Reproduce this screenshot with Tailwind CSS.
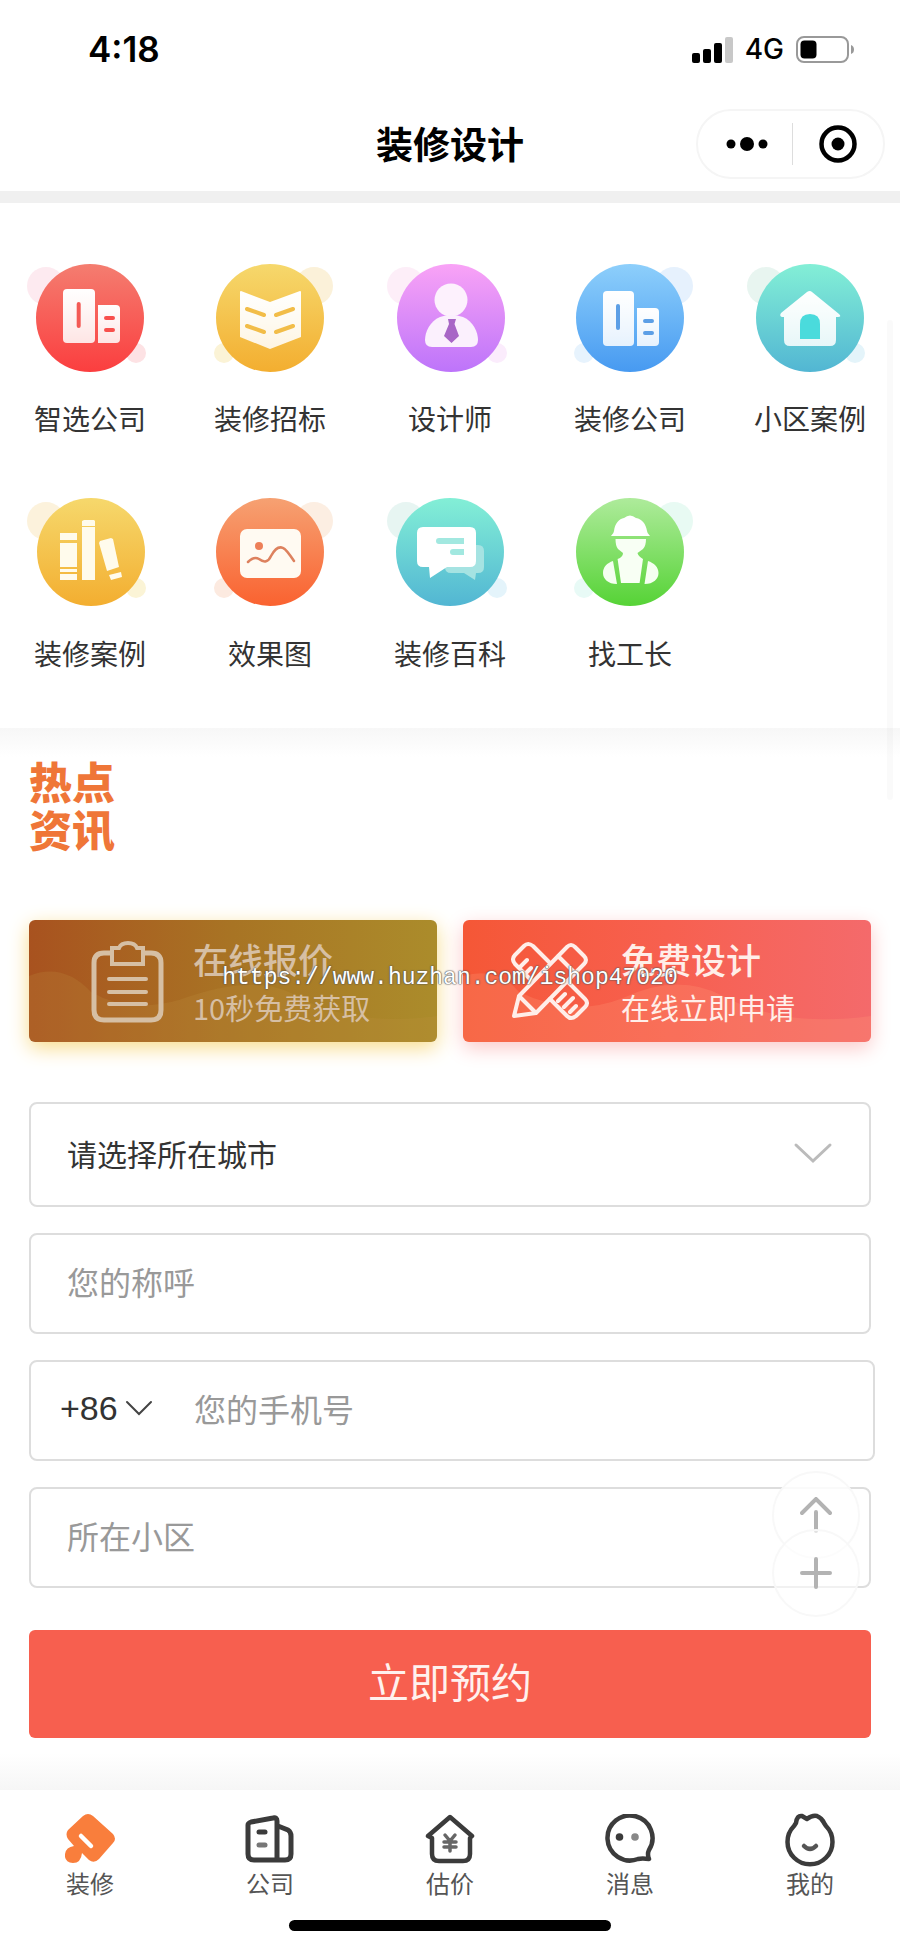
<!DOCTYPE html>
<html lang="zh-CN">
<head>
<meta charset="utf-8">
<meta name="viewport" content="width=device-width, initial-scale=1">
<title>装修设计</title>
<script src="https://cdn.jsdelivr.net/npm/@tailwindcss/browser@4"></script>
</head>
<body class="relative flex min-h-screen flex-col bg-white font-['Noto_Sans_CJK_SC',sans-serif] text-[#333]">

<header class="border-b-12 border-[#f0f0f0] text-black">
  <div class="flex h-24 items-center justify-between pt-[2px] pr-[46px] pl-22 font-['Inter',sans-serif]">
    <time class="text-[35px] font-semibold">4:18</time>
    <div class="flex items-center gap-3">
      <svg class="h-[27px] w-[41px]" viewBox="0 0 41 27" aria-label="信号"><rect x="0" y="17" width="8" height="10" rx="2"/><rect x="11" y="13" width="8" height="14" rx="2"/><rect x="22" y="7" width="8" height="20" rx="2"/><rect x="33" y="1" width="8" height="26" rx="2" fill="#c8c8c8"/></svg>
      <span class="text-[28px] font-medium">4G</span>
      <svg class="h-[27px] w-[58px]" viewBox="0 0 58 27" aria-label="电量"><rect x="1" y="1" width="51" height="25" rx="7" fill="none" stroke="#999" stroke-width="2"/><rect x="4.500" y="4.500" width="16" height="18" rx="4"/><path d="M55 9q3 1 3 4.500t-3 4.500z" fill="#999"/></svg>
    </div>
  </div>
  <div class="grid h-[95px] grid-cols-[1fr_auto_1fr] items-center pr-[15px] pl-[15px]">
    <span></span>
    <h1 class="text-[37px] font-bold">装修设计</h1>
    <div class="flex h-[70px] w-[189px] items-center justify-self-end rounded-full border-2 border-[#f5f5f5]">
      <button type="button" class="flex flex-1 justify-center pl-1" aria-label="更多"><svg class="h-4 w-[42px]" viewBox="0 0 42 16"><circle cx="5" cy="8" r="4.500"/><circle cx="21" cy="8" r="7"/><circle cx="37" cy="8" r="4.500"/></svg></button>
      <span class="h-[42px] w-px bg-[#ddd]"></span>
      <button type="button" class="flex flex-1 justify-center" aria-label="关闭"><svg class="size-[38px]" viewBox="0 0 38 38"><circle cx="19" cy="19" r="16.500" fill="none" stroke="#000" stroke-width="4.500"/><circle cx="19" cy="19" r="6.500"/></svg></button>
    </div>
  </div>
</header>

<svg class="absolute size-0" aria-hidden="true">
  <defs>
    <linearGradient id="red" x2="0" y2="1"><stop stop-color="#f47d70"/><stop offset="1" stop-color="#fb3e3f"/></linearGradient>
    <linearGradient id="gold" x2="0" y2="1"><stop stop-color="#f6d86c"/><stop offset="1" stop-color="#f3ae30"/></linearGradient>
    <linearGradient id="purple" x2="0" y2="1"><stop stop-color="#f9a3f6"/><stop offset="1" stop-color="#bd74fa"/></linearGradient>
    <linearGradient id="blue" x2="0" y2="1"><stop stop-color="#8dcffb"/><stop offset="1" stop-color="#479af1"/></linearGradient>
    <linearGradient id="teal" x2="0" y2="1"><stop stop-color="#83efd6"/><stop offset="1" stop-color="#52b6d3"/></linearGradient>
    <linearGradient id="orange" x2="0" y2="1"><stop stop-color="#f6a172"/><stop offset="1" stop-color="#fa6230"/></linearGradient>
    <linearGradient id="green" x2="0" y2="1"><stop stop-color="#aeeb9b"/><stop offset="1" stop-color="#56d336"/></linearGradient>
    <linearGradient id="paper" x2="0" y2="1"><stop stop-color="#fff"/><stop offset="1" stop-color="#fff" stop-opacity=".85"/></linearGradient>
  </defs>
</svg>

<nav aria-label="服务" class="grid grid-cols-5 gap-y-[55px] py-[55px] text-[28px] leading-10">
  <a href="#" class="flex flex-col items-center gap-5">
    <svg class="size-[120px] overflow-visible" viewBox="0 0 120 120"><circle cx="16" cy="28" r="19" fill="#fdeaf0"/><circle cx="106" cy="95" r="10" fill="#fde2e4"/><circle cx="60" cy="60" r="54" fill="url(#red)"/><rect x="33" y="31" width="32" height="54" rx="4" fill="url(#paper)"/><path d="M68 47h18q4 0 4 4v30q0 4-4 4H68z" fill="url(#paper)"/><path d="M48.700 46v22" stroke="#f35a55" stroke-width="4" stroke-linecap="round"/><path d="M76 60h7M76 72h7" stroke="#f8504d" stroke-width="4" stroke-linecap="round"/></svg>
    <span>智选公司</span>
  </a>
  <a href="#" class="flex flex-col items-center gap-5">
    <svg class="size-[120px] overflow-visible" viewBox="0 0 120 120"><circle cx="104" cy="28" r="19" fill="#fbf1d9"/><circle cx="14" cy="95" r="10" fill="#fbf3d6"/><circle cx="60" cy="60" r="54" fill="url(#gold)"/><path d="M31 33l29 11 30-11q1 0 1 1v45L60 91 30 79V34q0-1 1-1z" fill="url(#paper)"/><path d="M37 51l17 6M66 57l17-6M37 68l17 6M66 74l17-6" stroke="#f2bd48" stroke-width="4" stroke-linecap="round"/></svg>
    <span>装修招标</span>
  </a>
  <a href="#" class="flex flex-col items-center gap-5">
    <svg class="size-[120px] overflow-visible" viewBox="0 0 120 120"><circle cx="16" cy="28" r="19" fill="#fdeef8"/><circle cx="107" cy="95" r="10" fill="#fbecfc"/><circle cx="61" cy="60" r="54" fill="url(#purple)"/><circle cx="61" cy="42" r="16.500" fill="#fdf1fd"/><path d="M50 59Q61 55 73 59C83 63 88 74 88 82Q88 89 81 89H42Q35 89 35 82C35 74 40 63 50 59Z" fill="#fbf0fd"/><path d="M58 61h8l-1.500 5 4.500 12-7.500 7-7.500-7 5-12z" fill="#a866c6"/></svg>
    <span>设计师</span>
  </a>
  <a href="#" class="flex flex-col items-center gap-5">
    <svg class="size-[120px] overflow-visible" viewBox="0 0 120 120"><circle cx="104" cy="28" r="19" fill="#e6f1fd"/><circle cx="14" cy="95" r="10" fill="#e7f3fd"/><circle cx="60" cy="60" r="54" fill="url(#blue)"/><rect x="33" y="33" width="31" height="55" rx="4" fill="url(#paper)"/><path d="M67 50h18q4 0 4 4v30q0 4-4 4H67z" fill="url(#paper)"/><path d="M48 48v22" stroke="#5c9fe6" stroke-width="4" stroke-linecap="round"/><path d="M75 63h7M75 75h7" stroke="#5c9fe6" stroke-width="4" stroke-linecap="round"/></svg>
    <span>装修公司</span>
  </a>
  <a href="#" class="flex flex-col items-center gap-5">
    <svg class="size-[120px] overflow-visible" viewBox="0 0 120 120"><circle cx="16" cy="28" r="19" fill="#e8f5f0"/><circle cx="105" cy="95" r="10" fill="#e4f4fa"/><circle cx="60" cy="60" r="54" fill="url(#teal)"/><path d="M57 34q3-2 5 0l27 22q3 3-1 3h-2v23q0 6-6 6H40q-6 0-6-6V59h-2q-3-1-1-4z" fill="url(#paper)"/><path d="M50 81V66q0-10 10-10t10 10v15z" fill="#4adbdc"/></svg>
    <span>小区案例</span>
  </a>
  <a href="#" class="flex flex-col items-center gap-5">
    <svg class="size-[120px] overflow-visible" viewBox="0 0 120 120"><circle cx="16" cy="28" r="19" fill="#fcf2dc"/><circle cx="106" cy="95" r="10" fill="#fbf4d6"/><circle cx="61" cy="59" r="54" fill="url(#gold)"/><path d="M30 40h17v7H30zM30 50h17v24H30zM30 76h17v3H30zM30 81h17v6H30zM54 27h10l1 1v5H52v-5zM52 34h13v53H52zM70 48l11-3 2 1 6 28-12 4-8-28zM79 82l12-3 1 5-11 3z" fill="#fffbec"/></svg>
    <span>装修案例</span>
  </a>
  <a href="#" class="flex flex-col items-center gap-5">
    <svg class="size-[120px] overflow-visible" viewBox="0 0 120 120"><circle cx="104" cy="28" r="19" fill="#fceee2"/><circle cx="14" cy="95" r="10" fill="#fceae0"/><circle cx="60" cy="59" r="54" fill="url(#orange)"/><rect x="30" y="36" width="61" height="49" rx="7" fill="#fffaf2"/><circle cx="49" cy="53" r="4" fill="#ed7f58"/><path d="M38 69Q44 63 49 66Q57 72 61 63Q67 52 73 55Q76 56 84 68" fill="none" stroke="#dd815e" stroke-width="2.500" stroke-linecap="round"/></svg>
    <span>效果图</span>
  </a>
  <a href="#" class="flex flex-col items-center gap-5">
    <svg class="size-[120px] overflow-visible" viewBox="0 0 120 120"><circle cx="16" cy="28" r="19" fill="#e7f5f2"/><circle cx="107" cy="95" r="10" fill="#e4f4fb"/><circle cx="60" cy="59" r="54" fill="url(#teal)"/><path d="M61 52h27q6 0 6 6v16q0 6-6 6h-2l-1 7-11-7H61q-6 0-6-6V58q0-6 6-6z" fill="#a5e3e2"/><path d="M33 34h47q6 0 6 6v28q0 6-6 6H57L40 85l-1-11h-6q-6 0-6-6V40q0-6 6-6z" fill="#fff"/><path d="M49 48h25M63 59h11" stroke="#a2e8e0" stroke-width="6"/><path d="M49 45a3 3 0 000 6M63 56a3 3 0 000 6" fill="#a2e8e0"/></svg>
    <span>装修百科</span>
  </a>
  <a href="#" class="flex flex-col items-center gap-5">
    <svg class="size-[120px] overflow-visible" viewBox="0 0 120 120"><circle cx="104" cy="28" r="19" fill="#e8faf3"/><circle cx="14" cy="95" r="10" fill="#e8faf6"/><circle cx="60" cy="59" r="54" fill="url(#green)"/><path d="M41 43q3-3 3-5c1-8 5-12 10-13q6-5 12 0c6 1 10 6 11 13q0 2 3 5z" fill="#fff"/><path d="M45.500 46H76Q76 53 73 56L67.500 60Q68 63 73 66L69.600 90H51L47.600 66Q53 64 53 60L48 56Q45.500 53 45.500 46Z" fill="#f8fff4"/><path d="M43 68l4 23c-9 0-14-5-14-11 0-6 4-10 10-12zM78 68l-3.500 23c9 0 14-5 14-11 0-6-4.500-10-10.500-12z" fill="#f4fff0"/></svg>
    <span>找工长</span>
  </a>
</nav>

<main class="flex flex-1 flex-col px-[29px]">
  <section class="-mx-[29px] bg-linear-to-b from-[#f7f7f7] to-white to-15% px-[29px] pt-7 pb-[68px]">
    <h2 class="w-24 text-[43px] leading-12 font-black text-[#ef7638]">热点<br>资讯</h2>
  </section>

  <section class="relative grid grid-cols-2 gap-[26px] leading-12">
    <a href="#" class="relative flex h-[122px] items-center gap-[29px] overflow-hidden rounded-md bg-linear-to-r from-[#a8521f] via-[#a87424] to-[#ab8c2b] pl-[62px] text-[#d6bfa4] shadow-[0_6px_20px_#f8dc8c]">
      <svg class="absolute inset-0 size-full" viewBox="0 0 408 122" preserveAspectRatio="none" aria-hidden="true"><path d="M0 56Q34 42 62 72Q100 94 150 80Q220 54 260 72Q320 108 408 96V122H0z" fill="#c09040" fill-opacity=".22"/></svg>
      <svg class="relative h-[83px] w-[73px] shrink-0" viewBox="0 0 73 83" fill="none" stroke="currentColor" stroke-width="5" stroke-linecap="round"><path d="M20 13H13Q3 13 3 23V70Q3 80 13 80H60Q70 80 70 70V23Q70 13 60 13H53"/><path d="M21 8H28Q30 3 37 3T46 8H52V24H21Z" stroke-linecap="butt" stroke-width="4"/><path d="M18 39H55M18 52H55M18 64H55" stroke-width="4"/></svg>
      <div class="relative pt-1 whitespace-nowrap">
        <h3 class="text-[35px] font-medium">在线报价</h3>
        <p class="text-[29px]">10秒免费获取</p>
      </div>
    </a>
    <a href="#" class="relative flex h-[122px] items-center gap-8 overflow-hidden rounded-md bg-linear-to-r from-[#f55736] via-[#f7604f] to-[#f46a6b] pl-12 text-[#ffeee9] shadow-[0_6px_20px_#fbc8c8]">
      <svg class="absolute inset-0 size-full" viewBox="0 0 408 122" preserveAspectRatio="none" aria-hidden="true"><path d="M0 56Q34 46 56 72Q110 98 160 78Q215 52 260 76Q320 108 408 96V122H0z" fill="#ff9a78" fill-opacity=".25"/></svg>
      <svg class="relative size-[78px] shrink-0 overflow-visible" viewBox="0 0 78 78" fill="none" stroke="currentColor" stroke-width="4" stroke-linejoin="round" stroke-linecap="round"><path d="M38 20L22 4Q17 0 13 4L4 13Q0 17 4 22L20 38M57 40L74 57Q78 61 74 65L65 74Q60 78 56 74L39 57M9 25l7-7M15 31l5-5M47 59l7-7M53 65l9-9M59 70l6-6"/><path d="M8 54L56 5Q60 1 64 5L73 14Q77 18 73 22L25 71L3 74ZM8 54L25 71M47 14L64 31"/></svg>
      <div class="relative pt-1 whitespace-nowrap">
        <h3 class="text-[35px] font-medium">免费设计</h3>
        <p class="text-[29px]">在线立即申请</p>
      </div>
    </a>
    <span class="pointer-events-none absolute inset-x-0 top-[34px] text-center font-['Liberation_Mono',monospace] text-[23px] text-white [text-shadow:0_0_1px_#555,0_0_1px_#555,0_0_2px_#555]">https://www.huzhan.com/ishop47020</span>
  </section>

  <form class="relative mt-[60px] flex flex-col gap-[26px] text-[32px]">
    <div class="relative">
      <select aria-label="请选择所在城市" class="h-[105px] w-full appearance-none rounded-lg border-2 border-[#ddd] bg-white pb-[2px] pl-9 text-[30px]"><option>请选择所在城市</option></select>
      <svg class="pointer-events-none absolute top-10 right-[38px] h-[22px] w-10" viewBox="0 0 40 22" fill="none" stroke="#bbb" stroke-width="3" stroke-linecap="round"><path d="M3 3L20 19L37 3"/></svg>
    </div>
    <input type="text" aria-label="您的称呼" placeholder="您的称呼" class="h-[101px] rounded-lg border-2 border-[#ddd] pb-[6px] pl-9 placeholder:text-[#999]">
    <div class="-mr-1 flex h-[101px] rounded-lg border-2 border-[#ddd]">
      <div class="relative">
        <select aria-label="区号" class="h-full w-[134px] appearance-none bg-transparent pb-1 pl-[29px] font-['Liberation_Sans',sans-serif] text-[34px]"><option>+86</option></select>
        <svg class="pointer-events-none absolute top-[38px] right-3 h-4 w-7" viewBox="0 0 28 16" fill="none" stroke="#444" stroke-width="2" stroke-linecap="round"><path d="M2 2L14 14L26 2"/></svg>
      </div>
      <input type="tel" aria-label="您的手机号" placeholder="您的手机号" class="min-w-0 flex-1 pb-[6px] pl-[29px] placeholder:text-[#999]">
    </div>
    <input type="text" aria-label="所在小区" placeholder="所在小区" class="h-[101px] rounded-lg border-2 border-[#ddd] pb-[6px] pl-9 placeholder:text-[#999]">
    <button type="submit" class="mt-4 h-[108px] rounded-md bg-[#f75f4f] pb-[6px] text-[41px] text-[#fff1ee]">立即预约</button>

    <div class="absolute top-[369px] right-[11px] flex flex-col text-[#b3b3b3]">
      <button type="button" aria-label="返回顶部" class="flex size-[88px] items-center justify-center rounded-full border-2 border-[#f8f8f8] bg-white/85"><svg class="h-9 w-8" viewBox="0 0 32 36" fill="none" stroke="currentColor" stroke-width="4" stroke-linecap="round"><path d="M2 16L16 2L30 16M16 15V34"/></svg></button>
      <button type="button" aria-label="更多操作" class="-mt-[30px] flex size-[88px] items-center justify-center rounded-full border-2 border-[#f8f8f8] bg-white/60"><svg class="size-8" viewBox="0 0 32 32" fill="none" stroke="currentColor" stroke-width="4" stroke-linecap="round"><path d="M2 16H30M16 2V30"/></svg></button>
    </div>
  </form>
  <div class="-mx-[29px] min-h-[52px] flex-1 bg-linear-to-b from-white from-30% to-[#f6f6f6]"></div>
</main>

<footer class="flex flex-col items-center bg-white pt-6 pb-[17px]">
  <nav aria-label="主导航" class="grid w-full grid-cols-5 text-2xl leading-[30px] text-[#555]">
    <a href="#" aria-current="page" class="flex flex-col items-center gap-1"><svg class="size-[50px]" viewBox="0 0 50 50"><path d="M18 2Q23-2 28 2L48 20Q52 25 48 29L34 45Q29 50 24 46L17 39Q16 49 8 49Q-1 48 0 40Q1 33 9 32L3 25Q0 20 3 16Z" fill="#f97e3c"/><path d="M16 22L26 32" stroke="#fff" stroke-width="4.500" stroke-linecap="round"/></svg>装修</a>
    <a href="#" class="flex flex-col items-center gap-1"><svg class="size-[50px]" viewBox="0 0 50 50" fill="none" stroke="#3b3b3b" stroke-width="5" stroke-linecap="round" stroke-linejoin="round"><path d="M3 11Q3 9 6 8L28 4Q32 3 32 7V46H9Q3 46 3 40ZM33 12L43 16Q46 18 46 22V40Q46 46 40 46H32"/><path d="M14 18H20"/><path d="M14 31H20" stroke="#777"/></svg>公司</a>
    <a href="#" class="flex flex-col items-center gap-1"><svg class="size-[50px]" viewBox="0 0 50 50" fill="none" stroke="#3b3b3b" stroke-width="4.500" stroke-linecap="round" stroke-linejoin="round"><path d="M3 22L25 3L47 22L45 24V40Q45 47 38 47H14Q7 47 7 40V24Z"/><path d="M20 21L25 27L30 21M25 27V37M19 28H31M19 33H31" stroke="#666" stroke-width="3.500"/></svg>估价</a>
    <a href="#" class="flex flex-col items-center gap-1"><svg class="size-[50px]" viewBox="0 0 50 50" fill="none" stroke="#3b3b3b" stroke-width="4.500" stroke-linejoin="round"><path d="M33 45A22.500 22.500 0 1 1 44 36Q42 40 44 45Q37 44 33 45Z"/><circle cx="14.500" cy="23" r="3.800" fill="#3b3b3b" stroke="none"/><circle cx="30" cy="23" r="3.800" fill="#888" stroke="none"/></svg>消息</a>
    <a href="#" class="flex flex-col items-center gap-1"><svg class="size-[50px] overflow-visible" viewBox="0 0 50 50" fill="none" stroke="#3b3b3b" stroke-width="4.500" stroke-linecap="round" stroke-linejoin="round"><path d="M11 9Q12 1 17 2L22 5Q27 1 32 2Q37 4 39 9L41 12A22.500 22.500 0 1 1 9 12Z"/><path d="M19 32Q25 38 31 32" stroke="#555"/></svg>我的</a>
  </nav>
  <div class="mt-[22px] h-[11px] w-[322px] rounded-full bg-black"></div>
</footer>

<div class="pointer-events-none absolute top-80 right-[7px] h-[480px] w-[6px] rounded-full bg-black/2"></div>
</body>
</html>
